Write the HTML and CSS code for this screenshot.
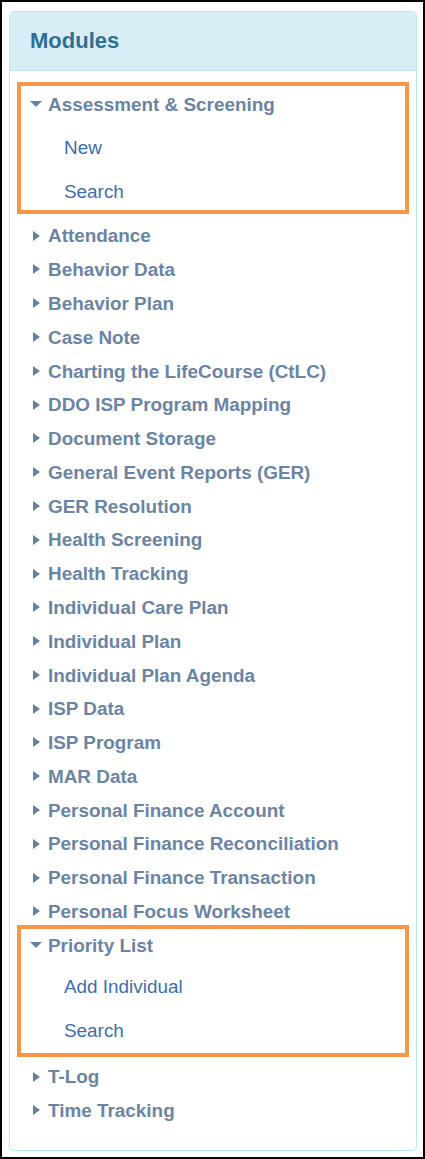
FILE: index.html
```html
<!DOCTYPE html>
<html lang="en">
<head>
<meta charset="utf-8">
<title>Modules</title>
<link rel="stylesheet" href="styles.css">
</head>
<body>
<div class="frame">
  <div class="panel">
    <div class="panel-heading">
      <h3 class="panel-title">Modules</h3>
    </div>
    <div class="panel-body">
      <ul class="module-list">
        <li class="group">
          <div class="group-head"><span class="caret caret-down"></span><span>Assessment &amp; Screening</span></div>
          <ul class="sub-list">
            <li>New</li>
            <li>Search</li>
          </ul>
        </li>
        <li class="item"><span class="caret caret-right"></span><span>Attendance</span></li>
        <li class="item"><span class="caret caret-right"></span><span>Behavior Data</span></li>
        <li class="item"><span class="caret caret-right"></span><span>Behavior Plan</span></li>
        <li class="item"><span class="caret caret-right"></span><span>Case Note</span></li>
        <li class="item"><span class="caret caret-right"></span><span>Charting the LifeCourse (CtLC)</span></li>
        <li class="item"><span class="caret caret-right"></span><span>DDO ISP Program Mapping</span></li>
        <li class="item"><span class="caret caret-right"></span><span>Document Storage</span></li>
        <li class="item"><span class="caret caret-right"></span><span>General Event Reports (GER)</span></li>
        <li class="item"><span class="caret caret-right"></span><span>GER Resolution</span></li>
        <li class="item"><span class="caret caret-right"></span><span>Health Screening</span></li>
        <li class="item"><span class="caret caret-right"></span><span>Health Tracking</span></li>
        <li class="item"><span class="caret caret-right"></span><span>Individual Care Plan</span></li>
        <li class="item"><span class="caret caret-right"></span><span>Individual Plan</span></li>
        <li class="item"><span class="caret caret-right"></span><span>Individual Plan Agenda</span></li>
        <li class="item"><span class="caret caret-right"></span><span>ISP Data</span></li>
        <li class="item"><span class="caret caret-right"></span><span>ISP Program</span></li>
        <li class="item"><span class="caret caret-right"></span><span>MAR Data</span></li>
        <li class="item"><span class="caret caret-right"></span><span>Personal Finance Account</span></li>
        <li class="item"><span class="caret caret-right"></span><span>Personal Finance Reconciliation</span></li>
        <li class="item"><span class="caret caret-right"></span><span>Personal Finance Transaction</span></li>
        <li class="item"><span class="caret caret-right"></span><span>Personal Focus Worksheet</span></li>
        <li class="group group-tight">
          <div class="group-head"><span class="caret caret-down"></span><span>Priority List</span></div>
          <ul class="sub-list">
            <li>Add Individual</li>
            <li>Search</li>
          </ul>
        </li>
        <li class="item"><span class="caret caret-right"></span><span>T-Log</span></li>
        <li class="item"><span class="caret caret-right"></span><span>Time Tracking</span></li>
      </ul>
    </div>
  </div>
</div>
</body>
</html>
```

FILE: styles.css
```css
html, body {
  margin: 0;
  padding: 0;
  background: #ffffff;
}

body {
  font-family: "Liberation Sans", Arial, sans-serif;
}

.frame {
  width: 425px;
  height: 1159px;
  box-sizing: border-box;
  border: 2px solid #000000;
  padding: 9px 6px 0 7px;
  background: #ffffff;
}

.panel {
  border: 1px solid #bce8f1;
  border-radius: 5px;
  background: #ffffff;
}

.panel-heading {
  background: #d9edf7;
  border-bottom: 1px solid #bce8f1;
  border-radius: 4px 4px 0 0;
  padding: 16px 20px 17px;
}

.panel-title {
  margin: 0;
  font-size: 22px;
  line-height: 25px;
  font-weight: bold;
  color: #2f6f91;
}

.panel-body {
  padding: 14.5px 7px 23px;
}

.module-list {
  list-style: none;
  margin: 0;
  padding: 0;
  display: flex;
  flex-direction: column;
  font-size: 18.9px;
  line-height: 27px;
}

.item {
  display: flex;
  align-items: flex-start;
  padding: 3.4px 0 3.4px 13px;
  font-weight: bold;
  color: #6b84a4;
}

.group {
  border: 4px solid #f79646;
  margin: -3.5px 0 5px;
  padding: 5px 0 5.5px;
}

.group-tight {
  padding: 3px 0 8.5px;
  margin-bottom: 3px;
}

.group-head {
  display: flex;
  align-items: flex-start;
  padding-left: 9px;
  font-weight: bold;
  color: #6b84a4;
}

.caret {
  display: block;
  flex: none;
  width: 0;
  height: 0;
}

.caret-right {
  border-left: 7px solid #6581a6;
  border-top: 5px solid transparent;
  border-bottom: 5px solid transparent;
  margin: 8.3px 8.3px 0 2.7px;
}

.caret-down {
  border-top: 6px solid #6581a6;
  border-left: 6px solid transparent;
  border-right: 6px solid transparent;
  margin: 10.3px 6px 0 0;
}

.sub-list {
  list-style: none;
  margin: 15.5px 0 0;
  padding: 0 0 0 43px;
  display: flex;
  flex-direction: column;
  gap: 17px;
  font-weight: normal;
  color: #3d6eac;
}

.group-tight .sub-list {
  margin-top: 14.5px;
}
```
